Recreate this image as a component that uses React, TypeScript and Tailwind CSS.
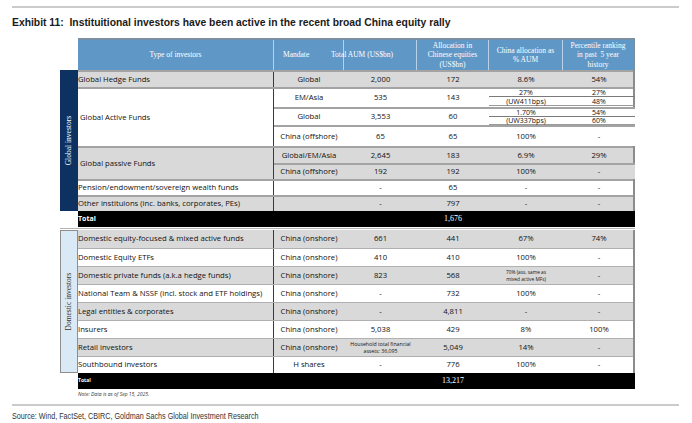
import * as React from 'react';

const GRID = 'grid grid-cols-[70px_73px_72px_74px_72px] items-center text-center';
const SANS = 'font-["Open_Sans",sans-serif]';
const SERIF = 'font-["Liberation_Serif",serif]';
const NARROW = 'font-["Liberation_Sans_Narrow","Liberation_Sans",sans-serif]';

type Cell = React.ReactNode;

function Split({ top, bottom, a, b }: { top: string; bottom: string; a: string; b: string }) {
  return (
    <div className="flex h-full flex-col justify-start text-[7px]">
      <div className={`${a} border-b border-[#7a7a7a]`}>{top}</div>
      <div className={`${b} border-b border-[#9a9a9a]`}>{bottom}</div>
    </div>
  );
}

function Values({ cells, h, bg }: { cells: Cell[]; h: string; bg: string }) {
  return (
    <div className={`${GRID} ${h} ${bg} border-t-2 border-[#a3a3a3]`}>
      {cells.map((c, i) => (
        <div key={i} className={i === 0 ? 'h-full flex items-center justify-center' : 'h-full flex flex-col justify-center'}>
          {c}
        </div>
      ))}
    </div>
  );
}

function Row({ label, cells, h, bg }: { label: string; cells: Cell[]; h: string; bg: string }) {
  return (
    <div className={`flex ${h} ${bg} border-t-2 border-[#a3a3a3]`}>
      <div className="flex w-[196px] shrink-0 items-center border-r border-[#3a3a3a] whitespace-nowrap">{label}</div>
      <div className={`${GRID} flex-1`}>
        {cells.map((c, i) => (
          <div key={i}>{c}</div>
        ))}
      </div>
    </div>
  );
}

function TotalRow({ value, small }: { value: string; small?: boolean }) {
  return (
    <div className="flex h-[16px] items-center bg-black text-white">
      <div className={`w-[196px] shrink-0 font-bold ${small ? 'text-[5px]' : 'text-[7px]'}`}>Total</div>
      <div className={`${GRID} flex-1`}>
        <div />
        <div />
        <div className={`${SERIF} text-[8px]`}>{value}</div>
        <div />
        <div />
      </div>
    </div>
  );
}

function Band({ label, dark }: { label: string; dark?: boolean }) {
  return (
    <div
      className={`flex w-[18px] shrink-0 items-center justify-center ${
        dark ? 'bg-[#0d3161] text-white' : 'bg-[#dae9f6] text-[#333] border border-[#8e8e8e]'
      }`}
    >
      <span className={`${SERIF} -rotate-90 whitespace-nowrap text-[7.5px]`}>{label}</span>
    </div>
  );
}

const domestic: { label: string; mandate: string; cells: Cell[] }[] = [
  { label: 'Domestic equity-focused & mixed active funds', mandate: 'China (onshore)', cells: ['661', '441', '67%', '74%'] },
  { label: 'Domestic Equity ETFs', mandate: 'China (onshore)', cells: ['410', '410', '100%', '-'] },
  {
    label: 'Domestic private funds (a.k.a hedge funds)',
    mandate: 'China (onshore)',
    cells: [
      '823',
      '568',
      <span key="x" className="block text-[4.8px] leading-[7px]">70% <span>(ass. same as</span><br />mixed active MFs)</span>,
      '-',
    ],
  },
  { label: 'National Team & NSSF (incl. stock and ETF holdings)', mandate: 'China (onshore)', cells: ['-', '732', '100%', '-'] },
  { label: 'Legal entities & corporates', mandate: 'China (onshore)', cells: ['-', '4,811', '-', '-'] },
  { label: 'Insurers', mandate: 'China (onshore)', cells: ['5,038', '429', '8%', '100%'] },
  {
    label: 'Retail investors',
    mandate: 'China (onshore)',
    cells: [
      <span key="h" className="block text-[5.2px] leading-[7px] whitespace-nowrap">Household total financial<br />assets: 36,095</span>,
      '5,049',
      '14%',
      '-',
    ],
  },
  { label: 'Southbound investors', mandate: 'H shares', cells: ['-', '776', '100%', '-'] },
];

export default function App() {
  return (
    <div className="h-[423px] w-[692px] overflow-hidden bg-white px-[12px] pt-[6px] pr-[13px]">
      <div className="h-[2px] bg-[#cbcbcb]" />
      <h1 className={`${NARROW} mt-[8px] origin-left scale-x-[0.94] text-[11px] font-bold leading-[12px] text-[#1a1a1a] whitespace-nowrap`}>
        Exhibit 11:&nbsp; Instituitional investors have been active in the recent broad China equity rally
      </h1>

      <div className={`ml-[48px] mt-[10px] w-[575px] ${SANS} text-[7.7px] text-[#111]`}>
        {/* Header */}
        <div className="ml-[18px] flex h-[32px] border-t-2 border-r-2 border-[#7b8fa3] bg-[#5f98c7] text-white">
          <div className={`${SERIF} flex w-[196px] items-center justify-center border-r border-[#b9d2ea] text-[7.5px]`}>Type of investors</div>
          <div className={`${SERIF} flex w-[70px] items-center pl-[9px] border-r border-[#b9d2ea] text-[7.5px]`}>Mandate</div>
          <div className={`${SERIF} flex w-[73px] items-center border-r border-[#b9d2ea] text-[7.5px] whitespace-nowrap`}>
            <span className="-ml-[13px]">Total AUM (US$bn)</span>
          </div>
          <div className={`${SERIF} flex w-[72px] items-center justify-center border-r border-[#b9d2ea] text-center text-[7.5px] leading-[9.5px]`}>
            Allocation in<br />Chinese equities<br />(US$bn)
          </div>
          <div className={`${SERIF} flex w-[74px] items-center justify-center border-r border-[#b9d2ea] text-center text-[7.5px] leading-[9.5px]`}>
            China allocation as<br />% AUM
          </div>
          <div className={`${SERIF} flex flex-1 items-center justify-center text-center text-[7.5px] leading-[9.5px]`}>
            Percentile ranking<br />in past&nbsp; 5 year<br />history
          </div>
        </div>

        {/* Global investors */}
        <div className="flex">
          <div className="flex h-[141px]">
            <Band label="Global investors" dark />
          </div>
          <div className="flex w-[557px] flex-col">
            <div className="border-r-2 border-[#8c8c8c]">
              <Row label="Global Hedge Funds" h="h-[17px]" bg="bg-[#d9d9d9]" cells={['Global', '2,000', '172', '8.6%', '54%']} />

              <div className="flex h-[59px] border-t-2 border-[#a3a3a3] bg-white">
                <div className="flex w-[196px] shrink-0 items-center border-r border-[#3a3a3a] pl-[2px]">Global Active Funds</div>
                <div className="flex flex-1 flex-col">
                  <div className={`${GRID} h-[18px]`}>
                    <div>EM/Asia</div>
                    <div>535</div>
                    <div>143</div>
                    <Split top="27%" bottom="(UW411bps)" a="h-[8px] leading-[8px]" b="h-[9px] leading-[9px]" />
                    <Split top="27%" bottom="48%" a="h-[8px] leading-[8px]" b="h-[9px] leading-[9px]" />
                  </div>
                  <Values
                    h="h-[18px]"
                    bg="bg-white"
                    cells={[
                      'Global',
                      '3,553',
                      '60',
                      <Split key="a" top="1.70%" bottom="(UW337bps)" a="h-[8px] leading-[8px]" b="h-[8px] leading-[8px]" />,
                      <Split key="b" top="54%" bottom="60%" a="h-[8px] leading-[8px]" b="h-[8px] leading-[8px]" />,
                    ]}
                  />
                  <Values h="h-[21px]" bg="bg-white" cells={['China (offshore)', '65', '65', '100%', '-']} />
                </div>
              </div>

              <div className="flex h-[33px] border-t-2 border-[#a3a3a3] bg-[#d9d9d9]">
                <div className="flex w-[196px] shrink-0 items-center border-r border-[#3a3a3a] pl-[2px]">Global passive Funds</div>
                <div className="flex flex-1 flex-col">
                  <div className={`${GRID} h-[16px]`}>
                    <div>Global/EM/Asia</div>
                    <div>2,645</div>
                    <div>183</div>
                    <div>6.9%</div>
                    <div>29%</div>
                  </div>
                  <Values h="h-[17px]" bg="bg-[#d9d9d9]" cells={['China (offshore)', '192', '192', '100%', '-']} />
                </div>
              </div>

              <Row label="Pension/endowment/sovereign wealth funds" h="h-[16px]" bg="bg-white" cells={['', '-', '65', '-', '-']} />
              <Row label="Other instituions (inc. banks, corporates, PEs)" h="h-[16px]" bg="bg-[#d9d9d9]" cells={['', '-', '797', '-', '-']} />
            </div>
          </div>
        </div>
        <div className="ml-[18px]">
          <TotalRow value="1,676" />
        </div>

        {/* Domestic investors */}
        <div className="mt-[1px] border-t border-[#b5b5b5]" />
        <div className="mt-[1px] flex">
          <Band label="Domestic investors" />
          <div className="w-[557px] border-r-2 border-[#8c8c8c]">
            {domestic.map((r, i) => (
              <div
                key={r.label}
                className={`flex ${i === 7 ? 'h-[17px]' : 'h-[18px]'} ${i % 2 === 0 ? 'bg-[#d9d9d9]' : 'bg-white'} ${i > 0 ? 'border-t border-[#b0b0b0]' : ''}`}
              >
                <div className="flex w-[196px] shrink-0 items-center border-r border-[#3a3a3a] whitespace-nowrap">{r.label}</div>
                <div className={`${GRID} flex-1`}>
                  <div className="whitespace-nowrap">{r.mandate}</div>
                  {r.cells.map((c, j) => (
                    <div key={j}>{c}</div>
                  ))}
                </div>
              </div>
            ))}
          </div>
        </div>
        <div className="ml-[18px]">
          <TotalRow value="13,217" small />
        </div>
        <div className="ml-[18px] mt-[2px] text-[5px] italic leading-[7px] text-[#333]">Note: Data is as of Sep 15, 2025.</div>
      </div>

      <div className="mt-[6px] h-[2px] bg-[#cbcbcb]" />
      <div className={`${NARROW} mt-[5px] origin-left scale-x-[0.8] text-[9px] leading-[11px] text-[#333] whitespace-nowrap`}>
        Source: Wind, FactSet, CBIRC, Goldman Sachs Global Investment Research
      </div>
    </div>
  );
}
